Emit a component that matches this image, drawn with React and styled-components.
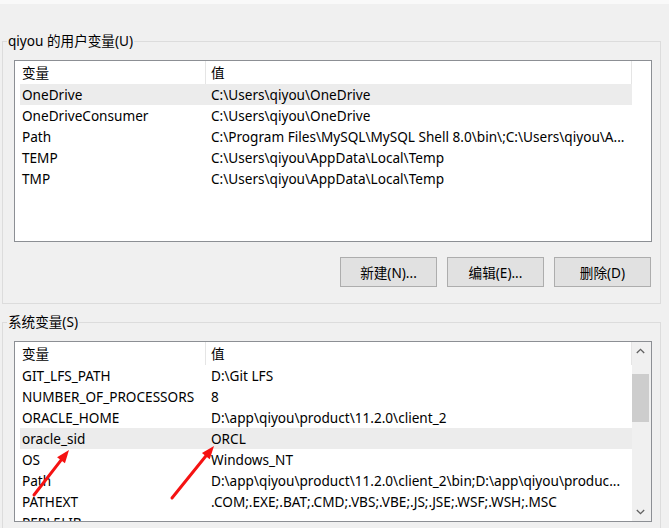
import React from "react";
import styled, { createGlobalStyle } from "styled-components";

const Global = createGlobalStyle`
  html, body { margin: 0; padding: 0; background: #f0f0f0; }
  body {
    font-family: "Noto Sans", "Noto Sans CJK SC", sans-serif;
    font-size: 13.6px;
    color: #000;
  }
  * { box-sizing: border-box; }
`;

const Window = styled.div`
  position: relative;
  width: 669px;
  height: 528px;
  overflow: hidden;
  background: #f0f0f0;
  display: flex;
  flex-direction: column;
`;

const TopStrip = styled.div`
  height: 4px;
  flex-shrink: 0;
  background: #f9f9f9;
`;

const Group = styled.fieldset`
  flex-shrink: 0;
  margin: ${(p) => p.$mt}px 0 0 2px;
  width: 659px;
  min-width: 0;
  border: 1px solid #dcdcdc;
  padding: 10px 8px ${(p) => p.$pb}px 11px;
`;

const Legend = styled.legend`
  margin-left: -7px;
  padding: 0 1px;
  line-height: 18px;
  font-size: 13.6px;
`;

const ListBox = styled.div`
  height: ${(p) => p.$h}px;
  border: 1px solid #8c8f94;
  background: #fff;
  display: flex;
  overflow: hidden;
`;

const Columns = styled.div`
  flex: 1;
  min-width: 0;
  padding-left: 5px;
  display: flex;
  flex-direction: column;
`;

const HeaderRow = styled.div`
  display: grid;
  grid-template-columns: 186px 1fr;
  height: 23px;
  flex-shrink: 0;
  border-right: 1px solid #e5e5e5;
`;

const HeaderCell = styled.div`
  line-height: 24px;
  padding-left: ${(p) => (p.$first ? 2 : 5)}px;
  border-right: ${(p) => (p.$first ? "1px solid #e5e5e5" : "none")};
  white-space: nowrap;
  overflow: hidden;
`;

const Row = styled.div`
  display: grid;
  grid-template-columns: 186px 1fr;
  height: 21px;
  flex-shrink: 0;
  background: ${(p) => (p.$selected ? "#ececec" : "transparent")};
`;

const Cell = styled.div`
  line-height: 22px;
  padding-left: ${(p) => (p.$first ? 2 : 5)}px;
  white-space: nowrap;
  overflow: hidden;
`;

const Gutter = styled.div`
  width: 19px;
  flex-shrink: 0;
`;

const ScrollBar = styled.div`
  width: 19px;
  flex-shrink: 0;
  background: #f0f0f0;
  display: flex;
  flex-direction: column;
`;

const ArrowBtn = styled.div`
  height: 18px;
  flex-shrink: 0;
  display: flex;
  align-items: center;
  justify-content: center;
  padding-right: 2px;
`;

const Track = styled.div`
  flex: 1;
  padding-top: 14px;
`;

const Thumb = styled.div`
  width: 17px;
  height: 48px;
  background: #cdcdcd;
`;

const ButtonRow = styled.div`
  display: flex;
  justify-content: flex-end;
  gap: 10px;
  margin-top: 15px;
  padding-right: 1px;
`;

const Button = styled.button`
  width: 97px;
  height: 30px;
  margin: 0;
  padding: 0;
  background: #e1e1e1;
  border: 1px solid #adadad;
  font: inherit;
  font-size: 13.6px;
  color: #000;
`;

const Overlay = styled.svg`
  position: absolute;
  left: 0;
  top: 0;
  pointer-events: none;
`;

const Chevron = ({ up }) => (
  <svg width="9" height="6" viewBox="0 0 9 6">
    <polyline
      points={up ? "0.8,5 4.5,1.3 8.2,5" : "0.8,1 4.5,4.7 8.2,1"}
      fill="none"
      stroke="#606060"
      strokeWidth="1.3"
    />
  </svg>
);

const userVars = [
  ["OneDrive", "C:\\Users\\qiyou\\OneDrive", true],
  ["OneDriveConsumer", "C:\\Users\\qiyou\\OneDrive"],
  ["Path", "C:\\Program Files\\MySQL\\MySQL Shell 8.0\\bin\\;C:\\Users\\qiyou\\A..."],
  ["TEMP", "C:\\Users\\qiyou\\AppData\\Local\\Temp"],
  ["TMP", "C:\\Users\\qiyou\\AppData\\Local\\Temp"],
];

const sysVars = [
  ["GIT_LFS_PATH", "D:\\Git LFS"],
  ["NUMBER_OF_PROCESSORS", "8"],
  ["ORACLE_HOME", "D:\\app\\qiyou\\product\\11.2.0\\client_2"],
  ["oracle_sid", "ORCL", true],
  ["OS", "Windows_NT"],
  ["Path", "D:\\app\\qiyou\\product\\11.2.0\\client_2\\bin;D:\\app\\qiyou\\produc..."],
  ["PATHEXT", ".COM;.EXE;.BAT;.CMD;.VBS;.VBE;.JS;.JSE;.WSF;.WSH;.MSC"],
  ["PERL5LIB", ""],
];

const VarList = ({ height, rows, scroll }) => (
  <ListBox $h={height}>
    <Columns>
      <HeaderRow>
        <HeaderCell $first>变量</HeaderCell>
        <HeaderCell>值</HeaderCell>
      </HeaderRow>
      {rows.map(([k, v, sel]) => (
        <Row key={k + v} $selected={!!sel}>
          <Cell $first>{k}</Cell>
          <Cell>{v}</Cell>
        </Row>
      ))}
    </Columns>
    {scroll ? (
      <ScrollBar>
        <ArrowBtn>
          <Chevron up />
        </ArrowBtn>
        <Track>
          <Thumb />
        </Track>
        <ArrowBtn>
          <Chevron />
        </ArrowBtn>
      </ScrollBar>
    ) : (
      <Gutter />
    )}
  </ListBox>
);

const RedArrow = ({ x1, y1, x2, y2 }) => {
  const dx = x2 - x1;
  const dy = y2 - y1;
  const len = Math.hypot(dx, dy);
  const ux = dx / len;
  const uy = dy / len;
  const hl = 13;
  const hw = 5;
  const bx = x2 - ux * hl;
  const by = y2 - uy * hl;
  const px = -uy;
  const py = ux;
  const pts = `${x2},${y2} ${bx + px * hw},${by + py * hw} ${bx - px * hw},${by - py * hw}`;
  return (
    <g>
      <line
        x1={x1}
        y1={y1}
        x2={bx + ux * 2}
        y2={by + uy * 2}
        stroke="#f51212"
        strokeWidth="3"
        strokeLinecap="round"
      />
      <polygon points={pts} fill="#f51212" />
    </g>
  );
};

export default function App() {
  return (
    <Window>
      <Global />
      <TopStrip />
      <Group $mt={28} $pb={16}>
        <Legend>qiyou 的用户变量(U)</Legend>
        <VarList height={182} rows={userVars} />
        <ButtonRow>
          <Button>新建(N)...</Button>
          <Button>编辑(E)...</Button>
          <Button>删除(D)</Button>
        </ButtonRow>
      </Group>
      <Group $mt={9} $pb={16}>
        <Legend>系统变量(S)</Legend>
        <VarList height={181} rows={sysVars} scroll />
      </Group>
      <Overlay width="669" height="528" viewBox="0 0 669 528">
        <RedArrow x1={34} y1={495} x2={69} y2={450} />
        <RedArrow x1={172} y1={498} x2={214} y2={446} />
      </Overlay>
    </Window>
  );
}
